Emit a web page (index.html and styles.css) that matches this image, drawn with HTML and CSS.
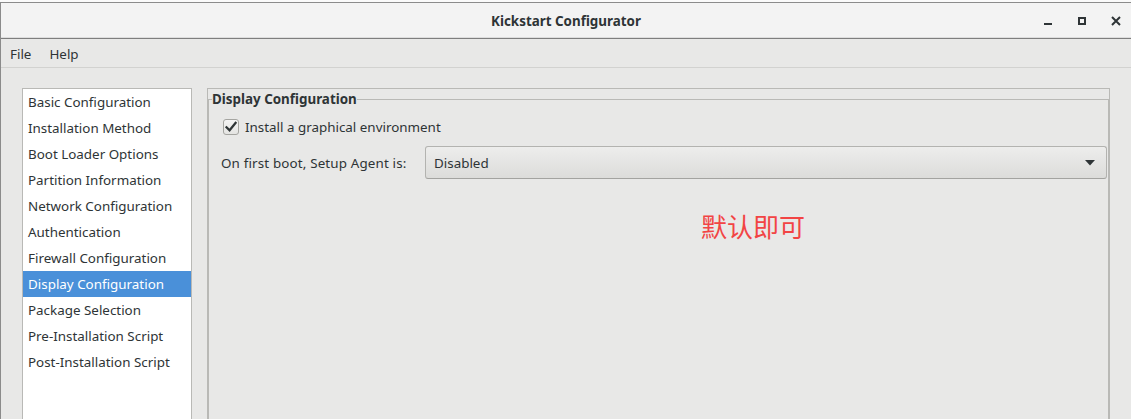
FILE: index.html
```html
<!DOCTYPE html>
<html>
<head>
<meta charset="utf-8">
<title>Kickstart Configurator</title>
<link rel="stylesheet" href="styles.css">
</head>
<body>
<div class="window">
  <header class="titlebar">
    <div></div>
    <div class="title">Kickstart Configurator</div>
    <div class="controls">
      <span class="ctl"><svg width="16" height="16" viewBox="0 0 16 16"><rect x="4" y="10" width="8" height="2" fill="#2e3436"/></svg></span>
      <span class="ctl"><svg width="16" height="16" viewBox="0 0 16 16"><rect x="5" y="5" width="6" height="6" fill="none" stroke="#2e3436" stroke-width="2"/></svg></span>
      <span class="ctl"><svg width="16" height="16" viewBox="0 0 16 16"><path d="M4 4 L12 12 M12 4 L4 12" stroke="#2e3436" stroke-width="2" fill="none"/></svg></span>
    </div>
  </header>
  <nav class="menubar">
    <span class="menu-item">File</span>
    <span class="menu-item">Help</span>
  </nav>
  <main class="main">
    <ul class="sidebar">
      <li class="item">Basic Configuration</li>
      <li class="item">Installation Method</li>
      <li class="item">Boot Loader Options</li>
      <li class="item">Partition Information</li>
      <li class="item">Network Configuration</li>
      <li class="item">Authentication</li>
      <li class="item">Firewall Configuration</li>
      <li class="item selected">Display Configuration</li>
      <li class="item">Package Selection</li>
      <li class="item">Pre-Installation Script</li>
      <li class="item">Post-Installation Script</li>
    </ul>
    <section class="panel">
      <fieldset class="frame">
        <legend class="legend">Display Configuration</legend>
        <label class="check-row">
          <span class="checkbox"><svg width="16" height="16" viewBox="0 0 16 16"><path d="M3.5 8.2 L6.6 11.3 L12.6 3.8" fill="none" stroke="#2e3436" stroke-width="2.2" stroke-linecap="square"/></svg></span>
          <span>Install a graphical environment</span>
        </label>
        <div class="combo-row">
          <span class="combo-label">On first boot, Setup Agent is:</span>
          <div class="combo">
            <span>Disabled</span>
            <svg class="arrow" width="10" height="6" viewBox="0 0 10 6"><path d="M0 0 L10 0 L5 5.5 Z" fill="#2e3436"/></svg>
          </div>
        </div>
        <div class="note">默认即可</div>
      </fieldset>
    </section>
  </main>
</div>
</body>
</html>
```
FILE: styles.css
```css
* { box-sizing: border-box; }
html, body { margin: 0; height: 100%; overflow: hidden; }
body {
  background: #fafafa;
  font-family: "Noto Sans", "Open Sans", sans-serif;
  font-size: 13.4px;
  color: #2e3436;
}
.window {
  margin-top: 2px;
  border-top: 1px solid #8b8b8b;
  border-left: 1px solid #8b8b8b;
  height: 417px;
  background: #e8e8e7;
  display: flex;
  flex-direction: column;
}
.titlebar {
  flex: none;
  height: 36px;
  background: #f3f3f3;
  border-bottom: 1px solid #7e7e7e;
  box-shadow: inset 0 -1px #dddddd;
  display: grid;
  grid-template-columns: 1fr auto 1fr;
  align-items: center;
}
.title {
  font-weight: bold;
  font-size: 13.4px;
  line-height: 18px;
}
.controls {
  display: flex;
  justify-content: flex-end;
  gap: 18px;
  padding-right: 7px;
}
.ctl { display: flex; width: 16px; height: 16px; }
.menubar {
  flex: none;
  height: 29px;
  border-bottom: 1px solid #d2d2d0;
  display: flex;
  align-items: center;
  gap: 18px;
  padding: 1px 0 0 9px;
}
.main {
  flex: 1;
  display: flex;
  gap: 15px;
  padding: 20px 21px 0 21px;
  min-height: 0;
}
.sidebar {
  list-style: none;
  margin: 0;
  padding: 0;
  width: 170px;
  flex: none;
  height: 360px;
  background: #ffffff;
  border: 1px solid #b9b9b6;
}
.item {
  height: 26px;
  line-height: 26px;
  padding-left: 5px;
  white-space: nowrap;
  color: #2e3436;
}
.item.selected {
  background: #4a90d9;
  color: #ffffff;
}
.panel {
  flex: 1;
  height: 360px;
  border: 1px solid #b9b9b6;
  border-bottom: none;
}
.frame {
  margin: 2px 0 0 0;
  padding: 0;
  height: 340px;
  border: 1px solid #b9b9b6;
  min-width: 0;
}
.legend {
  font-weight: bold;
  line-height: 17px;
  padding: 0;
  margin-left: 3px;
}
.check-row {
  display: flex;
  align-items: center;
  gap: 6px;
  margin: 11px 0 0 14px;
  height: 16px;
}
.checkbox {
  width: 16px;
  height: 16px;
  border: 1px solid #a5a5a1;
  border-radius: 3px;
  background: linear-gradient(#f4f4f4, #e4e4e2);
  display: flex;
  align-items: center;
  justify-content: center;
}
.checkbox svg { display: block; flex: none; }
.combo-row {
  display: flex;
  align-items: center;
  margin: 11px 1px 0 12px;
}
.combo-label {
  width: 204px;
  flex: none;
  letter-spacing: 0.15px;
}
.combo {
  flex: 1;
  height: 33px;
  border: 1px solid #b3b3b0;
  border-bottom-color: #a3a3a0;
  border-radius: 3px;
  background: linear-gradient(#ededec, #dcdcda);
  display: flex;
  align-items: center;
  justify-content: space-between;
  padding: 0 11px 0 8px;
}
.arrow { display: block; }
.note {
  margin: 32px 0 0 492px;
  font-family: "Noto Sans CJK SC", sans-serif;
  font-size: 26px;
  line-height: 30px;
  color: #f24444;
}
```
